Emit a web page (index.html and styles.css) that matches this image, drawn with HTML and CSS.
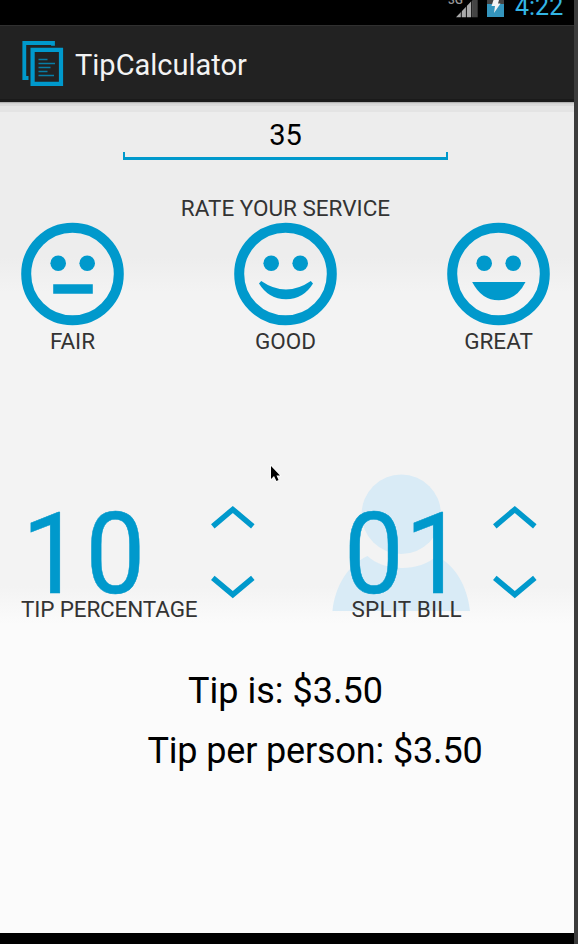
FILE: index.html
```html
<!DOCTYPE html>
<html lang="en">
<head>
<meta charset="utf-8">
<title>TipCalculator</title>
<link rel="stylesheet" href="styles.css">
</head>
<body>
<div class="screen">
  <div class="statusbar">
    <svg class="signal" width="32" height="18" viewBox="0 0 32 18">
      <path d="M8 17.3 24.5 0V17.3Z" fill="#aaa"/>
      <path d="M25 0H29.7V17.3H25Z" fill="#444"/>
      <path d="M13.3 0V18M18.4 0V18M23.6 0V18" stroke="#000" stroke-width=".9"/>
      <path d="M0 0H18V4L12 9Z" fill="#000"/>
    </svg>
    <span class="network">3G</span>
    <svg class="battery" width="17" height="18" viewBox="0 0 17 18">
      <path d="M0 0H17V4H0Z" fill="#444"/><path d="M0 4H17V17H0Z" fill="#3495bd"/>
      <path d="M6.5 0H12L11 3.5H13.5L7 13 8 6H4.5Z" fill="#f4f4f4"/>
    </svg>
    <span class="clock">4:22</span>
  </div>
  <header class="actionbar">
    <svg class="logo" width="42" height="46" viewBox="0 0 42 46" fill="none" stroke="#09c">
      <path d="M31 4.8V2H2.3V37H6.5" stroke-width="3.8"/>
      <path d="M10.6 8.8H39V42.8H10.6Z" stroke-width="4.2"/>
      <path d="M16.5 18.5H25.5M16.5 22.5H33M16.5 26.5H28.5M16.5 30.5H25.5M16.5 34.5H32" stroke="#087da5" stroke-width="1.4"/>
    </svg>
    <h1 class="title">TipCalculator</h1>
  </header>
  <main class="content">
    <div class="amount"><span>35</span></div>
    <h2 class="label rate">RATE YOUR SERVICE</h2>
    <div class="faces">
      <div class="face">
        <svg width="104" height="104" viewBox="0.5 0 104 104" fill="#09c">
          <circle cx="52" cy="52" r="46.3" fill="none" stroke="#09c" stroke-width="10"/>
          <circle cx="37.7" cy="41.3" r="7.8"/><circle cx="66.7" cy="41.3" r="7.8"/>
          <path d="M32.7 62.3H72.3V71.7H32.7Z"/>
        </svg>
        <span class="label fair">FAIR</span>
      </div>
      <div class="face">
        <svg width="104" height="104" viewBox="0.5 0 104 104" fill="#09c">
          <circle cx="52" cy="52" r="46.3" fill="none" stroke="#09c" stroke-width="10"/>
          <circle cx="37.7" cy="41.3" r="7.8"/><circle cx="66.7" cy="41.3" r="7.8"/>
          <path d="M25.5 61.5 27.7 59Q40 67.5 52.5 67.5Q65 67.5 77.3 59L79.5 61.5Q70 77.2 52.5 77.2Q35 77.2 25.5 61.5Z"/>
        </svg>
        <span class="label good">GOOD</span>
      </div>
      <div class="face">
        <svg width="104" height="104" viewBox="0.5 0 104 104" fill="#09c">
          <circle cx="52" cy="52" r="46.3" fill="none" stroke="#09c" stroke-width="10"/>
          <circle cx="37.7" cy="41.3" r="7.8"/><circle cx="66.7" cy="41.3" r="7.8"/>
          <path d="M25.7 60H79Q70 78.3 52.3 78.3Q35 78.3 25.7 60Z"/>
        </svg>
        <span class="label great">GREAT</span>
      </div>
    </div>
    <div class="pickers">
      <div class="picker tip">
        <span class="number">10</span>
        <svg class="arrows" width="44" height="96" viewBox="0 0 44 96" fill="none" stroke="#09c" stroke-width="5.5">
          <path d="M1.8 22.3 21.8 5.5 41.8 22.3M1.8 73.8 21.8 90.600 41.8 73.8"/>
        </svg>
        <span class="label pct">TIP PERCENTAGE</span>
      </div>
      <div class="picker split">
        <svg class="person" width="138" height="138" viewBox="0 0 138 138" fill="#d9ebf6">
          <circle cx="69.3" cy="40.3" r="39.7"/>
          <path d="M0.5 137C3 112 16 91 35.5 82C52 98 88 98 104.5 82C123 91 135.5 112 138 137Z"/>
        </svg>
        <span class="number">01</span>
        <svg class="arrows" width="44" height="96" viewBox="0 0 44 96" fill="none" stroke="#09c" stroke-width="5.5">
          <path d="M1.8 22.3 21.8 5.5 41.8 22.3M1.8 73.8 21.8 90.600 41.8 73.8"/>
        </svg>
        <span class="label bill">SPLIT BILL</span>
      </div>
    </div>
    <p class="result total">Tip is: $3.50</p>
    <p class="result person-total">Tip per person: $3.50</p>
    <svg class="cursor" width="12" height="18" viewBox="0 0 12 18">
      <path d="M1 1V14L4 11L6.5 16L8.5 15L6.5 10.5H10Z" stroke="#fff" stroke-width="1.5"/>
      <path d="M1 1V14L4 11L6.5 16L8.5 15L6.5 10.5H10Z"/>
    </svg>
  </main>
</div>
</body>
</html>
```
FILE: styles.css
```css
* { box-sizing: border-box; }
body {
  margin: 0;
  width: 578px;
  height: 944px;
  overflow: hidden;
  background: #3c3c3c;
  font-family: Roboto, "Liberation Sans", sans-serif;
}
.screen {
  width: 574px;
  height: 944px;
  display: flex;
  flex-direction: column;
  background: #000;
}
.statusbar {
  position: relative;
  flex: none;
  height: 25px;
  display: flex;
  align-items: flex-start;
  padding-left: 448px;
  overflow: hidden;
}
.network {
  position: absolute;
  left: 448px;
  top: -7px;
  font-size: 12px;
  line-height: 14px;
  font-weight: 500;
  color: #999;
}
.battery { margin-left: 7px; }
.clock {
  margin: -6px 0 0 11px;
  font-size: 25px;
  line-height: 26px;
  color: #33b5e5;
}
.actionbar {
  flex: none;
  height: 77px;
  display: flex;
  align-items: flex-start;
  padding: 15px 0 0 22px;
  background: #222;
  border-top: 1px solid #303030;
  border-bottom: 3px solid #1a1a1a;
}
.title {
  margin: 9px 0 0 11px;
  font-size: 29px;
  line-height: 30px;
  font-weight: 400;
  color: #f3f3f3;
}
.content {
  position: relative;
  height: 831px;
  display: flex;
  flex-direction: column;
  background:
    linear-gradient(#b2b2b2 0 1px, #d0d0d0 1px 2px, #d9d9d9 2px 4px, #e4e4e4 4px 10px, transparent 10px),
    linear-gradient(#ededed 0 155px, #f3f3f3 190px 484px, #fbfbfb 522px);
}
.amount {
  width: 325px;
  height: 40px;
  margin: 18px 0 0 123px;
  text-align: center;
  font-size: 29px;
  line-height: 30px;
  color: #000;
  background:
    linear-gradient(#09c, #09c) 0 100% / 100% 3px no-repeat,
    linear-gradient(#09c, #09c) 0 100% / 2px 8px no-repeat,
    linear-gradient(#09c, #09c) 100% 100% / 2px 8px no-repeat;
}
.label {
  margin: 0;
  font-size: 22.5px;
  line-height: 24px;
  font-weight: 400;
  color: #333;
  white-space: nowrap;
}
.rate { width: 571px; margin-top: 36px; text-align: center; }
.faces {
  display: flex;
  justify-content: space-between;
  width: 530px;
  margin: 2px 0 0 20.5px;
}
.face { width: 104px; text-align: center; }
.face svg { display: block; margin-bottom: 3px; }
.pickers {
  display: flex;
  height: 152px;
  margin-top: 121px;
}
.picker {
  position: relative;
  display: grid;
  grid-template-rows: 123px 24px;
  align-content: start;
}
.tip { width: 332px; grid-template-columns: 190px 44px; padding-left: 21px; }
.split { width: 238px; grid-template-columns: 151px 44px; padding-left: 10px; }
.number {
  position: relative;
  height: 86px;
  margin-top: 38px;
  font-size: 113px;
  line-height: 86px;
  color: #09c;
  -webkit-text-stroke: 0.5px #09c;
  transform: scaleX(0.94);
  transform-origin: 0 0;
}
.tip .number { padding-left: 1px; letter-spacing: 4px; }
.split .number { padding-left: 2px; letter-spacing: 1.5px; }
.arrows { margin-top: 30px; }
.picker .label { position: relative; grid-column: 1 / -1; }
.person { position: absolute; left: 0; top: 0; }
.pct { letter-spacing: -0.15px; }
.bill { padding-left: 9.5px; letter-spacing: 0.2px; }
.result {
  margin: 0;
  width: 571px;
  text-align: center;
  font-size: 36px;
  line-height: 40px;
  color: #000;
}
.total { margin-top: 45px; }
.person-total { margin-top: 20px; padding-left: 59px; letter-spacing: -0.15px; }
.cursor { position: absolute; left: 270px; top: 363px; }
```
